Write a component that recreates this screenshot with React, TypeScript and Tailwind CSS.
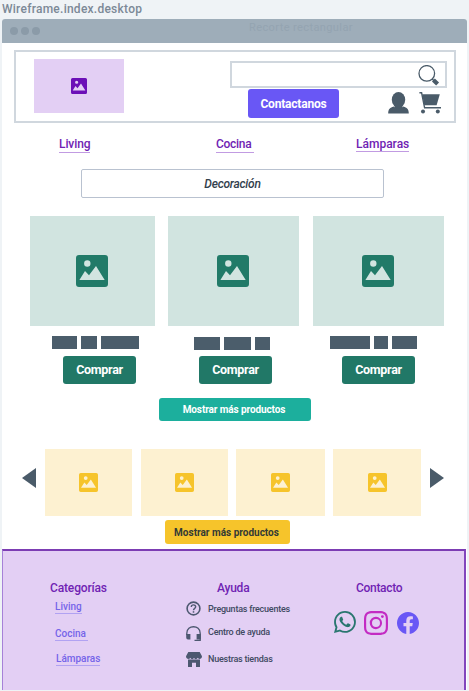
import React from "react";
import { BsWhatsapp, BsInstagram, BsFacebook } from "react-icons/bs";

function Picture({ className }: { className: string }) {
  return (
    <svg viewBox="0 0 32 32" className={className} fill="currentColor" fillRule="evenodd">
      <path d="M3 0H29Q32 0 32 3V29Q32 32 29 32H3Q0 32 0 29V3Q0 0 3 0ZM11.3 5.3a3.2 3.2 0 1 0 0 6.4a3.2 3.2 0 1 0 0-6.4ZM3.4 25H28.7L20 11L13 20.3L9 16Z" />
    </svg>
  );
}

function SearchIcon() {
  return (
    <svg viewBox="0 0 22 22" className="h-[22px] w-[22px]" fill="none" stroke="#4a5b69">
      <circle cx="8.8" cy="8.4" r="7.8" strokeWidth="1.3" />
      <path d="M14 13.8l2 2" strokeWidth="1.3" />
      <path d="M15.4 15l4.2 4" strokeWidth="4.2" />
    </svg>
  );
}

function UserIcon() {
  return (
    <svg viewBox="0 0 21 22" className="h-[22px] w-[21px]" fill="#4a5b69">
      <ellipse cx="10.5" cy="7.7" rx="6.7" ry="7.7" />
      <path d="M6.5 13H14.5V18H6.5Z" />
      <path d="M0.2 21.6C0.2 17.2 2.2 15.6 5.6 14.6C8 17 13 17 15.4 14.6C18.8 15.6 20.8 17.2 20.8 21.6Z" />
    </svg>
  );
}

function CartIcon() {
  return (
    <svg viewBox="0 0 22 22" className="h-[22px] w-[22px]" fill="#4a5b69">
      <path d="M3.2 2.2H20.8L17.6 13.2H5.2Z" />
      <path d="M0.4 0.8H2.6L5.6 15.8H22" fill="none" stroke="#4a5b69" strokeWidth="1.4" />
      <circle cx="4" cy="19.6" r="2" />
      <circle cx="18.8" cy="19.6" r="2" />
    </svg>
  );
}

function HelpIcon() {
  return (
    <svg viewBox="0 0 15 15" className="h-[15px] w-[15px]" fill="none" stroke="#4d5870">
      <circle cx="7.5" cy="7.5" r="6.4" strokeWidth="1.6" />
      <path d="M5.3 5.9C5.3 3.2 9.7 3.2 9.7 5.8C9.7 7.3 7.5 7.4 7.5 9.2" strokeWidth="1.4" />
      <path d="M7.5 10.2V11.7" strokeWidth="1.5" />
    </svg>
  );
}

function HeadsetIcon() {
  return (
    <svg viewBox="0 0 15 16" className="h-4 w-[15px]" fill="#4d5870">
      <path d="M0.8 9V7.2C0.8 -1.4 14.2 -1.4 14.2 7.2V14.4H8.5" fill="none" stroke="#4d5870" strokeWidth="1.3" />
      <path d="M0.2 8H4.4V13.4H2Q0.2 13.4 0.2 11.5ZM10.6 8H14.8V13.4H10.6Z" />
    </svg>
  );
}

function StoreIcon() {
  return (
    <svg viewBox="0 0 16 15" className="h-[15px] w-4" fill="#4d5870">
      <path d="M2.3 0H13.7L16 4.3C16 7.2 12.6 7.8 11.7 5.8C11 7.6 8.6 7.6 8 5.8C7.4 7.6 5 7.6 4.3 5.8C3.4 7.8 0 7.2 0 4.3Z" />
      <path d="M2 7.4H14V15H10V10.8H6V15H2Z" />
    </svg>
  );
}

function BuyButton({ className }: { className: string }) {
  return (
    <button className={`flex h-[28px] w-[73px] items-center justify-center rounded-[3px] bg-[#217867] pt-px text-[12.5px] font-bold tracking-[-0.3px] text-white ${className}`}>
      Comprar
    </button>
  );
}

const bar = "h-[13px] bg-[#4b5d6b]";
const tile = "flex h-[110px] items-center justify-center bg-[#d1e4e0] pr-[2px] text-[#217a68]";
const slide = "flex h-[67px] items-center justify-center bg-[#fdf1d1] text-[#f6c42b]";
const topLink = "block w-fit border-b border-[#c19be2] leading-[15px] whitespace-pre";
const footLink = "block w-fit border-b border-[#b1a2f2] text-[10px] leading-[12px] whitespace-pre";

export default function App() {
  return (
    <div className="h-[691px] w-[469px] overflow-hidden bg-[#eff3f6] pl-[2px] font-['Roboto',sans-serif] text-[#33414d]">
      <h1 className="h-[19px] pt-[2px] text-[12px] leading-[15px] font-medium tracking-[0.25px] text-[#7c8997]">
        Wireframe.index.desktop
      </h1>
      <div className="flex h-[671px] w-[465px] flex-col overflow-hidden rounded-t-[3px] bg-white">
        <div className="flex h-6 shrink-0 items-center bg-[#9eadb9]">
          <div className="flex w-[247px] gap-[3px] pl-2">
            <i className="size-2 rounded-full bg-[#8b9ba8]" />
            <i className="size-2 rounded-full bg-[#8b9ba8]" />
            <i className="size-2 rounded-full bg-[#8b9ba8]" />
          </div>
          <span className="mb-[7px] text-[11px] leading-4 tracking-[0.4px] text-[#94a4b1]">Recorte rectangular</span>
        </div>

        <header className="mt-[7px] ml-3 flex h-[73px] w-[442px] shrink-0 border-2 border-[#d0d7de]">
          <div className="mt-[7px] ml-[18px] flex h-[54px] w-[90px] items-center justify-center bg-[#e3cff4] text-[#6c10b7]">
            <Picture className="size-4" />
          </div>
          <div className="mt-[9px] ml-[106px] w-[217px]">
            <div className="flex h-[27px] justify-end border-2 border-[#d0d7de] pt-[2px] pr-[5px]">
              <SearchIcon />
            </div>
            <div className="mt-px ml-[18px] flex">
              <button className="h-[29px] w-[91px] rounded-[3px] bg-[#6957f5] text-[12px] font-bold tracking-[-0.2px] text-white">
                Contactanos
              </button>
              <div className="mt-[3px] ml-[49px] flex gap-[10px]">
                <UserIcon />
                <CartIcon />
              </div>
            </div>
          </div>
        </header>

        <nav className="mt-[13px] flex h-4 shrink-0 pt-px text-[12px] font-medium text-[#7023b3]">
          <div className="ml-[57px] w-[157px]"><a className={`${topLink} tracking-[-0.1px]`}>Living</a></div>
          <div className="w-[140px]"><a className={`${topLink} tracking-[-0.3px]`}>Cocina </a></div>
          <a className={topLink}>Lámparas</a>
        </nav>

        <div className="mt-[17px] ml-[79px] flex h-[29px] w-[303px] shrink-0 items-center justify-center rounded-[2px] border border-[#b9c2d0] text-[12px] font-medium tracking-[-0.25px] italic">
          Decoración
        </div>

        <div className="mt-[18px] ml-7 flex h-[110px] shrink-0">
          <div className={`${tile} w-[125px]`}><Picture className="size-8" /></div>
          <div className={`${tile} ml-[13px] w-[131px]`}><Picture className="size-8" /></div>
          <div className={`${tile} ml-[14px] w-[131px]`}><Picture className="size-8" /></div>
        </div>

        <div className="mt-[10px] ml-[50px] flex h-[15px] shrink-0">
          <div className="flex w-[142px] gap-1">
            <i className={`${bar} w-[25px]`} /><i className={`${bar} w-4`} /><i className={`${bar} w-[38px]`} />
          </div>
          <div className="flex w-[136px] gap-1 pt-px">
            <i className={`${bar} w-[26px]`} /><i className={`${bar} w-[27px]`} /><i className={`${bar} w-[15px]`} />
          </div>
          <div className="flex gap-1">
            <i className={`${bar} w-10`} /><i className={`${bar} w-[14px]`} /><i className={`${bar} w-[25px]`} />
          </div>
        </div>

        <div className="mt-[5px] ml-[61px] flex shrink-0">
          <BuyButton className="" />
          <BuyButton className="ml-[63px]" />
          <BuyButton className="ml-[70px]" />
        </div>

        <button className="mt-[14px] ml-[157px] h-[23px] w-[152px] shrink-0 rounded-[3px] bg-[#1caf9d] pr-[2px] text-[10px] font-bold tracking-[-0.1px] text-white">
          Mostrar más productos
        </button>

        <div className="mt-7 ml-5 flex h-[67px] shrink-0 items-center">
          <svg viewBox="0 0 14 20" className="mt-[-9px] h-5 w-[14px]" fill="#4a5b69"><path d="M0 10L14 0V20Z" /></svg>
          <div className={`${slide} ml-[9px] w-[87px]`}><Picture className="size-[19px]" /></div>
          <div className={`${slide} ml-[9px] w-[87px]`}><Picture className="size-[19px]" /></div>
          <div className={`${slide} ml-2 w-[89px]`}><Picture className="size-[19px]" /></div>
          <div className={`${slide} ml-2 w-[88px]`}><Picture className="size-[19px]" /></div>
          <svg viewBox="0 0 14 20" className="mt-[-9px] ml-[9px] h-5 w-[14px]" fill="#4a5b69"><path d="M14 10L0 0V20Z" /></svg>
        </div>

        <button className="mt-1 ml-[163px] h-6 w-[125px] shrink-0 rounded-[3px] bg-[#f6c42b] pr-[2px] text-[10px] font-bold text-[#333a36]">
          Mostrar más productos
        </button>

        <footer className="mt-[5px] flex h-[141px] w-[464px] shrink-0 border-t-2 border-r-2 border-l border-t-[#7c3db3] border-r-[#8246bd] border-l-[#a681d8] bg-[#e3cff4] pt-[29px] text-[#7023b3]">
          <section className="ml-[47px] w-[134px]">
            <h2 className="text-[12px] leading-4 font-medium tracking-[-0.15px]">Categorías</h2>
            <div className="ml-[5px] text-[#7564e9]">
              <a className={`${footLink} mt-[5px] font-medium`}>Living</a>
              <a className={`${footLink} mt-[14px] font-medium`}>Cocina </a>
              <a className={`${footLink} mt-3 ml-px font-medium`}>Lámparas</a>
            </div>
          </section>
          <section className="w-[147px]">
            <h2 className="ml-[33px] text-[12px] leading-4 font-medium tracking-[-0.2px]">Ayuda</h2>
            <div className="ml-[2px] text-[9px] leading-3 font-medium tracking-[-0.23px] text-[#414a62]">
              <div className="mt-[5px] flex h-[25px] gap-[7px]"><HelpIcon /><span className="mt-[2px]">Preguntas frecuentes</span></div>
              <div className="flex h-[26px] gap-[7px]"><HeadsetIcon /><span>Centro de ayuda</span></div>
              <div className="flex gap-[6px]"><StoreIcon /><span className="mt-px">Nuestras tiendas</span></div>
            </div>
          </section>
          <section>
            <h2 className="ml-[25px] text-[12px] leading-4 font-medium tracking-[-0.3px]">Contacto</h2>
            <div className="mt-[15px] ml-[3px] flex">
              <BsWhatsapp className="size-[22px] text-[#29766f]" />
              <BsInstagram className="ml-2 size-[24px] text-[#c32bc3]" />
              <BsFacebook className="mt-px ml-[9px] size-[22px] text-[#6957f5]" />
            </div>
          </section>
        </footer>
      </div>
    </div>
  );
}
